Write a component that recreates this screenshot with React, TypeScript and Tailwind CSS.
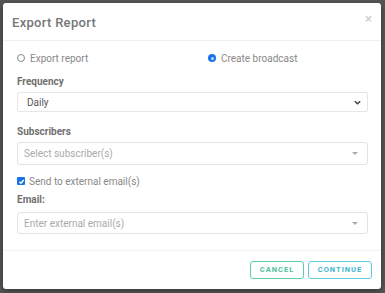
export default function App() {
	return (
		<div className="w-[385px] h-[293px] bg-[#565656] pt-[3px] pl-[3px] font-['Roboto',sans-serif]">
			<div className="w-[378px] h-[286px] bg-white rounded-[3px] shadow-[0_2px_6px_rgba(0,0,0,0.4)] flex flex-col">
				<div className="h-[38px] shrink-0 border-b border-[#f0f0f0] pl-[9px] pr-[9px] flex items-center justify-between">
					<h1 className="text-[13px] font-medium text-[#777] tracking-[0.3px] mt-[2px]">Export Report</h1>
					<span className="text-[13px] leading-none text-[#c8c8c8] -mt-[6px]">×</span>
				</div>
				<div className="flex-1 pl-[14px] pr-[13px] pt-[10px]">
					<div className="flex items-center h-[14px] text-[10px] text-[#888]">
						<label className="flex items-center gap-[5px] w-[191px]">
							<span className="w-[8px] h-[8px] rounded-full border border-[#888]" />
							Export report
						</label>
						<label className="flex items-center gap-[5px]">
							<span className="w-[8px] h-[8px] rounded-full bg-[#1a73e8] flex items-center justify-center">
								<span className="w-[3px] h-[3px] rounded-full bg-white/70" />
							</span>
							Create broadcast
						</label>
					</div>
					<div className="mt-[10px] h-[13px] text-[10px] font-bold text-[#707070] flex items-center">Frequency</div>
					<div className="mt-[4px] h-[20px] border border-[#e6e6e6] rounded-[2px] flex items-center justify-between pl-[9px] pr-[5px] text-[10px] text-[#555]">
						<span>Daily</span>
						<svg width="9" height="9" viewBox="0 0 10 10" fill="none" stroke="#444" strokeWidth="1.6">
							<path d="M2 3.5 L5 6.5 L8 3.5" />
						</svg>
					</div>
					<div className="mt-[13px] h-[13px] text-[10px] font-bold text-[#707070] flex items-center">Subscribers</div>
					<div className="mt-[4px] h-[23px] border border-[#e3e3e3] rounded-[3px] flex items-center justify-between pl-[6px] pr-[9px] text-[10px] text-[#aaa]">
						<span>Select subscriber(s)</span>
						<span className="w-0 h-0 border-l-[3px] border-r-[3px] border-t-[3px] border-l-transparent border-r-transparent border-t-[#aaa]" />
					</div>
					<label className="mt-[9px] h-[14px] flex items-center gap-[4px] text-[10px] text-[#888]">
						<span className="w-[8px] h-[8px] rounded-[1px] bg-[#1a73e8] flex items-center justify-center">
							<svg width="7" height="7" viewBox="0 0 10 10" fill="none" stroke="white" strokeWidth="2">
								<path d="M2 5.2 L4.2 7.4 L8.2 2.8" />
							</svg>
						</span>
						Send to external email(s)
					</label>
					<div className="mt-[5px] h-[13px] text-[10px] font-bold text-[#707070] flex items-center">Email:</div>
					<div className="mt-[6px] h-[22px] border border-[#e3e3e3] rounded-[3px] flex items-center justify-between pl-[6px] pr-[9px] text-[10px] text-[#aaa]">
						<span>Enter external email(s)</span>
						<span className="w-0 h-0 border-l-[3px] border-r-[3px] border-t-[3px] border-l-transparent border-r-transparent border-t-[#aaa]" />
					</div>
				</div>
				<div className="h-[39px] shrink-0 border-t border-[#f3f3f3] flex items-start justify-end gap-[4px] pt-[10px] pr-[9px]">
					<button className="w-[54px] h-[18px] border border-[#5ccfa8] rounded-[3px] text-[7.5px] font-bold tracking-[1px] text-[#4cc39c]">
						CANCEL
					</button>
					<button className="w-[64px] h-[18px] border border-[#5fcde0] rounded-[3px] text-[7.5px] font-bold tracking-[1px] text-[#3bb7d2]">
						CONTINUE
					</button>
				</div>
			</div>
		</div>
	);
}
